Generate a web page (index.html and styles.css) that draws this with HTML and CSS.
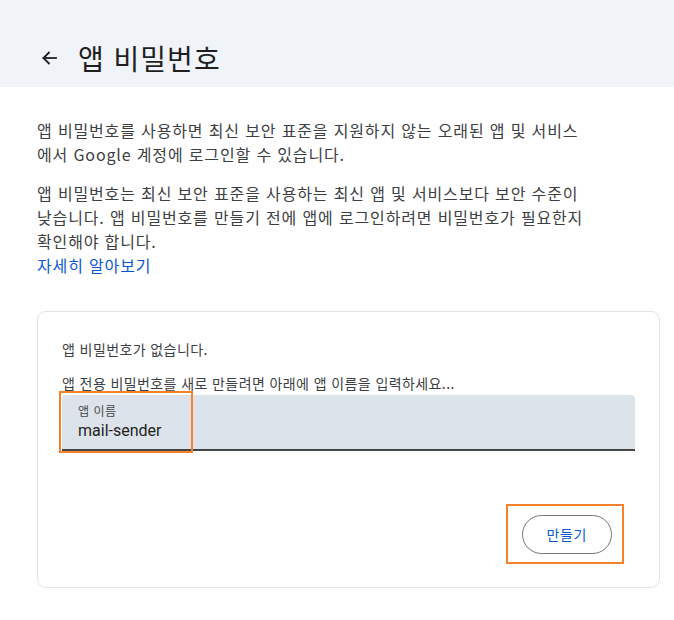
FILE: index.html
```html
<!DOCTYPE html>
<html lang="ko">
<head>
<meta charset="utf-8">
<title>앱 비밀번호</title>
<link rel="stylesheet" href="styles.css">
</head>
<body>
<header class="topbar">
  <div class="topbar-row">
    <span class="back" aria-label="뒤로">
      <svg width="16" height="16" viewBox="0 0 16 16" fill="none" stroke="#1f1f1f" stroke-width="1.8" stroke-linecap="square">
        <path d="M15 8H2.5"/>
        <path d="M8.5 2L2.5 8L8.5 14" stroke-linecap="butt"/>
      </svg>
    </span>
    <h1 class="title">앱 비밀번호</h1>
  </div>
</header>
<main class="content">
  <p class="desc">앱 비밀번호를 사용하면 최신 보안 표준을 지원하지 않는 오래된 앱 및 서비스<br>에서 Google 계정에 로그인할 수 있습니다.</p>
  <p class="desc desc-second">앱 비밀번호는 최신 보안 표준을 사용하는 최신 앱 및 서비스보다 보안 수준이<br>낮습니다. 앱 비밀번호를 만들기 전에 앱에 로그인하려면 비밀번호가 필요한지<br>확인해야 합니다.<br><a class="link" href="#">자세히 알아보기</a></p>

  <section class="card">
    <p class="card-text">앱 비밀번호가 없습니다.</p>
    <p class="card-text card-hint">앱 전용 비밀번호를 새로 만들려면 아래에 앱 이름을 입력하세요...</p>
    <div class="field">
      <span class="field-label">앱 이름</span>
      <span class="field-value">mail-sender</span>
      <span class="mark mark-field"></span>
    </div>
    <div class="actions">
      <div class="btn-wrap">
        <button class="btn" type="button">만들기</button>
        <span class="mark mark-btn"></span>
      </div>
    </div>
  </section>
</main>
</body>
</html>
```
FILE: styles.css
```css
* { box-sizing: border-box; }

body {
  margin: 0;
  background: #ffffff;
  font-family: "Noto Sans CJK KR", sans-serif;
  color: #3c4043;
  word-break: keep-all;
}

.topbar {
  height: 87px;
  background: #f0f4f9;
  padding: 38px 0 0 41px;
}

.topbar-row {
  display: flex;
  align-items: center;
  height: 40px;
  gap: 21px;
}

.back {
  display: flex;
  width: 16px;
  height: 16px;
}

.title {
  margin: 0;
  font-size: 28px;
  font-weight: 400;
  line-height: 40px;
  letter-spacing: 1px;
  color: #1f1f1f;
}

.content {
  padding: 31px 14px 0 37px;
}

.desc {
  margin: 0;
  width: 600px;
  font-size: 16px;
  line-height: 24px;
  letter-spacing: 0.85px;
}

.desc-second {
  margin-top: 15px;
}

.link {
  color: #0b57d0;
  text-decoration: none;
}

.card {
  margin-top: 34px;
  border: 1px solid #e1e3e1;
  border-radius: 9px;
  padding: 27px 24px 33px 24px;
}

.card-text {
  margin: 0;
  font-size: 14px;
  line-height: 20px;
  letter-spacing: 0.4px;
  color: #3c4043;
}

.card-hint {
  margin-top: 14px;
}

.field {
  position: relative;
  margin-top: 2px;
  height: 56px;
  background: #dde3ea;
  border-radius: 4px 4px 0 0;
  border-bottom: 2px solid #444746;
  padding: 8px 16px 0 16px;
  display: flex;
  flex-direction: column;
}

.field-label {
  font-size: 12px;
  line-height: 16px;
  letter-spacing: 0.5px;
  color: #444746;
}

.field-value {
  font-family: Roboto, "Noto Sans CJK KR", sans-serif;
  font-size: 16px;
  line-height: 24px;
  color: #1f1f1f;
}

.mark {
  position: absolute;
  border: 2px solid #f5822a;
  pointer-events: none;
}

.mark-field {
  left: -3px;
  top: -4px;
  width: 134px;
  height: 62px;
}

.actions {
  display: flex;
  justify-content: flex-end;
  padding-right: 23px;
  margin-top: 64px;
}

.btn-wrap {
  position: relative;
}

.btn {
  display: block;
  height: 39px;
  padding: 0 24px;
  border: 1px solid #747775;
  border-radius: 20px;
  background: #ffffff;
  color: #0b57d0;
  font-family: "Noto Sans CJK KR", sans-serif;
  font-size: 14px;
  line-height: 37px;
  letter-spacing: 0.6px;
}

.mark-btn {
  left: -16px;
  top: -11px;
  width: 118px;
  height: 60px;
}
```
